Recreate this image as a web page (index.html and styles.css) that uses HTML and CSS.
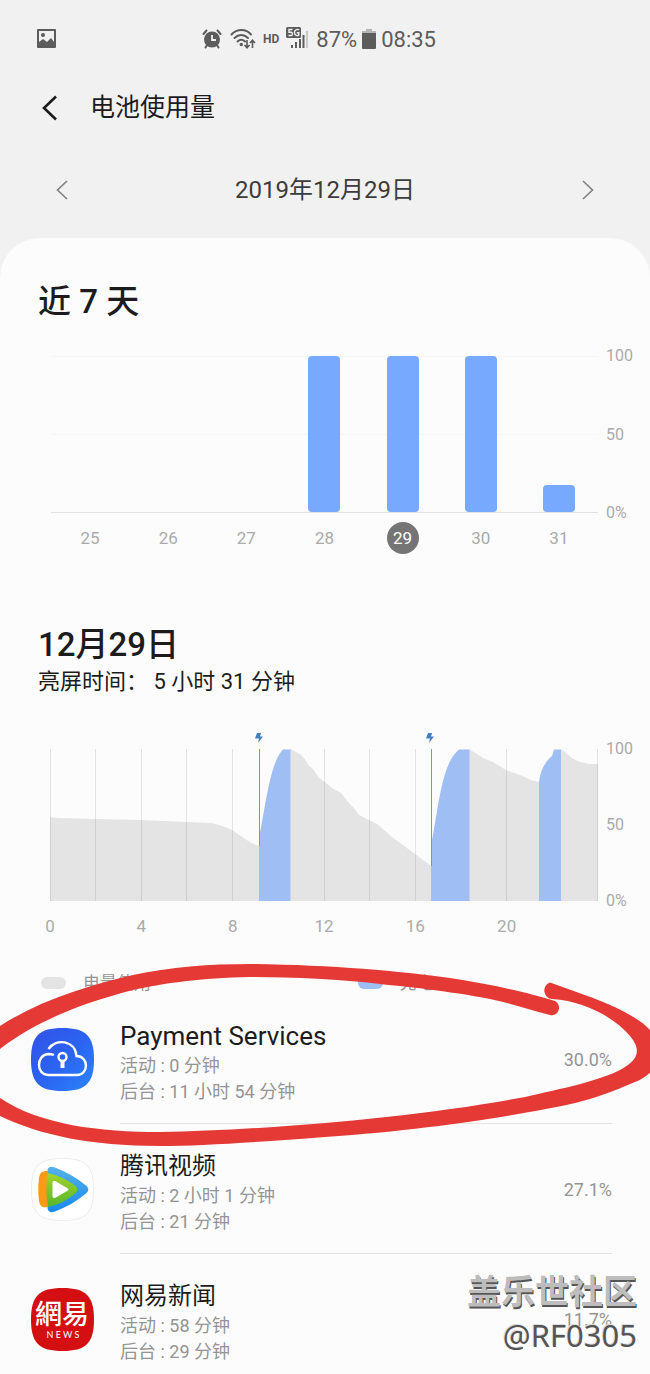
FILE: index.html
```html
<!DOCTYPE html>
<html lang="zh-CN">
<head>
  <meta charset="UTF-8">
  <title>电池使用量</title>
  <meta name="viewport" content="width=device-width, initial-scale=1">
  <link rel="stylesheet" href="styles.css">
</head>
<body>
  <div class="status-bar">
    <svg width="20" height="20" viewBox="0 0 20 20">
      <path fill="#5c5c5c" fill-rule="evenodd" d="M1 0h17a1 1 0 0 1 1 1v17a1 1 0 0 1-1 1H1a1 1 0 0 1-1-1V1a1 1 0 0 1 1-1zM2 2v11l4-3 4 3 4-4 3 4V2z"/>
      <circle cx="6" cy="6" r="2" fill="#5c5c5c"/>
    </svg>
    <div class="status-icons">
      <!-- alarm -->
      <svg width="20" height="20" viewBox="0 0 20 20" fill="none" stroke="#5c5c5c">
        <circle cx="10" cy="10.500" r="8" fill="#5c5c5c" stroke="none"/>
        <path stroke-width="2" stroke-linecap="round" d="M1.500 5l3-3.500M18.500 5l-3-3.500M5 16l-1.500 2.500M15 16l1.500 2.500"/>
        <path stroke="#f1f1f1" stroke-width="1.800" d="M10 6v5h4"/>
      </svg>
      <!-- wifi -->
      <svg class="wifi" width="26" height="20" viewBox="0 0 26 20" fill="none" stroke="#5c5c5c">
        <path stroke-width="2" stroke-linecap="round" d="M1.500 5.500C7-.5 16-.5 21 5.500M4.500 9c4-4 9.500-4 13.500 0M7.500 12.500c2.500-2.400 5-2.400 7.500 0"/>
        <circle cx="11.300" cy="15.500" r="1.700" fill="#5c5c5c" stroke="none"/>
        <path stroke-width="1.600" d="M17 11v7.500M14.500 16l2.500 2.800 2.500-2.800M22.500 19v-7.500M20 14l2.500-2.800L25 14"/>
      </svg>
      <span class="hd">HD</span>
      <!-- signal -->
      <svg class="signal" width="22" height="24" viewBox="0 0 22 24">
        <rect width="15" height="11" rx="1.500" fill="#5c5c5c"/>
        <path fill="none" stroke="#f1f1f1" stroke-width="1.400" d="M6.500 2.500H3v2.800h2.200c1.600 0 1.600 3.200 0 3.200H2.500M13 3c-1-1-4.500-1-4.500 2.500S12 9 12.800 8V5.800h-2"/>
        <path stroke="#5c5c5c" stroke-width="2" d="M6 18v3M10 15v6M14 12v9M17.500 8v13"/>
        <path stroke="#bdbdbd" stroke-width="1.500" d="M21 4v17"/>
      </svg>
      <span class="percent">87%</span>
      <svg class="battery" width="14" height="20" viewBox="0 0 14 20">
        <path fill="#b5b5b5" d="M4 0h6v2h4v3H0V2h4z"/>
        <path fill="#5c5c5c" d="M0 4h14v15a1 1 0 0 1-1 1H1a1 1 0 0 1-1-1z"/>
      </svg>
      <span>08:35</span>
    </div>
  </div>

  <header class="app-bar">
    <button type="button" aria-label="返回">
      <svg width="16" height="26" viewBox="0 0 16 26"><path fill="none" stroke="#1c1c1c" stroke-width="2.600" d="M14 1.500L2 13l12 11.500"/></svg>
    </button>
    <h1>电池使用量</h1>
  </header>

  <nav class="date-nav">
    <button type="button" aria-label="前一天">
      <svg width="12" height="20" viewBox="0 0 12 20"><path fill="none" stroke="#808080" stroke-width="1.600" d="M11 1L1.500 10l9.500 9"/></svg>
    </button>
    <span>2019年12月29日</span>
    <button type="button" aria-label="后一天">
      <svg width="12" height="20" viewBox="0 0 12 20"><path fill="none" stroke="#808080" stroke-width="1.600" d="M1 1l9.500 9L1 19"/></svg>
    </button>
  </nav>

  <main class="card">
    <section class="week">
      <h2>近 7 天</h2>
      <div class="chart">
        <div class="bars">
          <div class="bar" style="height: 0%"></div>
          <div class="bar" style="height: 0%"></div>
          <div class="bar" style="height: 0%"></div>
          <div class="bar" style="height: 100%"></div>
          <div class="bar" style="height: 100%"></div>
          <div class="bar" style="height: 100%"></div>
          <div class="bar" style="height: 17%"></div>
        </div>
        <div class="y-axis"><span>100</span><span>50</span><span>0%</span></div>
        <div class="days">
          <span>25</span>
          <span>26</span>
          <span>27</span>
          <span>28</span>
          <span class="selected">29</span>
          <span>30</span>
          <span>31</span>
        </div>
      </div>
    </section>

    <section class="day">
      <h2>12月29日</h2>
      <p>亮屏时间： 5 小时 31 分钟</p>
      <div class="chart">
        <svg class="area" viewBox="0 0 548 170" preserveAspectRatio="none">
          <!-- battery level -->
          <path fill="#e4e4e4" d="M0 170V86L8 87 46 88 91 89 137 91 161 92C170 94 176 96 182 99C190 104 202 114 210 115V170z"/>
          <path fill="#e4e4e4" d="M240 170V18L250 23 254 27 259 35 263 38 269 47 275 51 282 57 291 62 298 71 303 76 309 84 327 93 342 106 365 123 381 135V170z"/>
          <path fill="#e4e4e4" d="M419 170V18L433 27 443 31 456 39 470 44 481 49 489 51V170z"/>
          <path fill="#e4e4e4" d="M511 170V18L522 27 530 31 539 33H548V170z"/>
          <!-- two hour grid -->
          <path fill="none" stroke="#808080" stroke-opacity=".2" d="M.5 18V170M45.500 18V170M91.500 18V170M136.500 18V170M182.500 18V170M274.500 18V170M319.500 18V170M365.500 18V170M456.500 18V170M547.500 18V170"/>
          <!-- charging -->
          <path fill="#9fbef4" d="M209 170V108C216 70 221 30 233 18.500H240.500V170z"/>
          <path fill="#9fbef4" d="M381 170V115C389 73 392 32 409 18.500H419.500V170z"/>
          <path fill="#9fbef4" d="M489 170V51C491 38 495 31 502 25L504 18.500H511V170z"/>
          <path fill="none" stroke="#6a99d4" d="M209.500 18V115M381.500 18V135"/>
          <path fill="#4180bd" d="M207 2h4l-1 3.500h3l-5 6.500 1-4.500h-4zM378 2h4l-1 3.500h3l-5 6.500 1-4.500h-4z"/>
        </svg>
        <div class="y-axis"><span>100</span><span>50</span><span>0%</span></div>
        <div class="hours">
          <span>0</span>
          <span>4</span>
          <span>8</span>
          <span>12</span>
          <span>16</span>
          <span>20</span>
        </div>
      </div>
      <div class="legend">
        <span class="usage">电量使用</span>
        <span class="charging">充电</span>
      </div>
    </section>

    <section class="apps">
      <ul>
        <li>
          <svg class="app-icon" viewBox="0 0 63 63">
            <defs>
              <linearGradient id="cloud" x1="0" y1="0" x2="1" y2="1">
                <stop offset="0" stop-color="#3352e4"/>
                <stop offset=".5" stop-color="#2b63f2"/>
                <stop offset="1" stop-color="#2b85f8"/>
              </linearGradient>
            </defs>
            <path fill="url(#cloud)" d="M31.500 0C55 0 63 8 63 31.500S55 63 31.500 63 0 55 0 31.500 8 0 31.500 0z"/>
            <g fill="none" stroke="#fff" stroke-width="2.400">
              <path d="M17.500 21C25 10 44 12 45.500 28C58 28 58 47 46 47H17C5 47 5 27 17 26C19 26 21 26 23 27"/>
              <circle cx="31.500" cy="29" r="4"/>
              <path stroke-width="4" d="M31.500 33v7"/>
            </g>
          </svg>
          <div class="info">
            <div>
              <h3 class="latin">Payment Services</h3>
              <p>活动 : 0 分钟</p>
              <p>后台 : 11 小时 54 分钟</p>
            </div>
            <span class="share">30.0%</span>
          </div>
        </li>
        <li>
          <svg class="app-icon" viewBox="0 0 63 63">
            <defs>
              <linearGradient id="tv-blue" x1="0" y1="0" x2="0" y2="1">
                <stop offset="0" stop-color="#55b2e8"/>
                <stop offset="1" stop-color="#1789ee"/>
              </linearGradient>
              <linearGradient id="tv-green" x1="0" y1="0" x2="0" y2="1">
                <stop offset="0" stop-color="#a3d42c"/>
                <stop offset="1" stop-color="#56b62c"/>
              </linearGradient>
            </defs>
            <path fill="#fff" stroke="#ececec" d="M31.500 .5C55 .5 62.500 8 62.500 31.500S55 62.500 31.500 62.500 .5 55 .5 31.500 8 .5 31.500 .5z"/>
            <path fill="url(#tv-blue)" d="M16.500 12C17 9 20 8 24 9.500C36 14 46 20 55 27.500C58 30 58 33 55 35.500C46 43 36 49 24 53.500C20 55 17 54 16.500 50z"/>
            <path fill="#ff9a16" d="M17 13C11 13 9 14 8 20C7 28 7 36 8 43C9 49 12 50 17 49z"/>
            <path fill="url(#tv-green)" d="M16.500 15C27 17 37 22 44 27.500C47 30 47 33 44 35.500C37 42 27 47 17 49C15 38 15 25 16.500 15z"/>
            <path fill="#fff" d="M21.500 25C21.500 23 23 22.500 25 23.500L36 30C38 31 38 32 36 33L25 39.500C23 40.500 21.500 40 21.500 38z"/>
          </svg>
          <div class="info">
            <div>
              <h3>腾讯视频</h3>
              <p>活动 : 2 小时 1 分钟</p>
              <p>后台 : 21 分钟</p>
            </div>
            <span class="share">27.1%</span>
          </div>
        </li>
        <li>
          <svg class="app-icon" viewBox="0 0 63 63">
            <path fill="#d30f12" d="M31.500 0C55 0 63 8 63 31.500S55 63 31.500 63 0 55 0 31.500 8 0 31.500 0z"/>
            <text class="netease" x="31" y="36">網易</text>
            <text class="news" x="32" y="50">N E W S</text>
          </svg>
          <div class="info">
            <div>
              <h3>网易新闻</h3>
              <p>活动 : 58 分钟</p>
              <p>后台 : 29 分钟</p>
            </div>
            <span class="share">11.7%</span>
          </div>
        </li>
      </ul>

      <!-- red marker round the first app -->
      <svg class="marker" viewBox="0 950 650 200" preserveAspectRatio="none">
        <path fill="#e53935" d="M550 982.500C575 992 610 1002 635 1018C648 1026 658 1036 660 1052C658 1070 645 1078 635 1082C612 1092 592 1099 575 1103C530 1113 440 1129 325 1137C260 1142 200 1146 160 1146C90 1146 40 1135 0 1116C-30 1095-30 1050 0 1026C40 1000 90 985 133 975C170 967 210 964 250 964C330 965 400 971 450 978C490 984 530 993 555 1001A7.500 7.500 0 0 1 550 1015C530 1010 510 1003 490 999C450 991 400 986 380 984C340 979 290 977 250 977C200 978 165 983 133 990C90 1001 40 1018 0 1049C-14 1065-14 1085 0 1098C40 1125 100 1132 160 1132C270 1130 420 1117 525 1097C560 1089 605 1080 625 1067C641 1057 639 1047 630 1036C615 1018 585 1001 552 999A8.500 8.500 0 0 1 550 982.500z"/>
      </svg>
    </section>
  </main>

  <div class="watermark">
    <strong>盖乐世社区</strong>
    <span>@RF0305</span>
  </div>
</body>
</html>
```
FILE: styles.css
```css
:root {
  --page-bg: #f1f1f1;
  --card-bg: #fcfcfc;
  --text: #1c1c1c;
  --muted: #949494;
  --axis: #aaaaaa;
  --bar: #77aaff;
}
* {
  box-sizing: border-box;
}
body {
  position: relative;
  margin: 0;
  background: var(--page-bg);
  color: var(--text);
  font-family: Roboto, "Noto Sans CJK SC", sans-serif;
}
h1, h2, h3, p, ul {
  margin: 0;
  padding: 0;
}
svg {
  display: block;
}
button {
  padding: 0;
  border: none;
  background: none;
  cursor: pointer;
}

/* top of the screen */
.status-bar {
  display: grid;
  grid-template-columns: 1fr auto 1fr;
  align-items: center;
  height: 78px;
  padding: 0 49px 0 37px;
}
.status-icons {
  display: flex;
  align-items: center;
  color: #5c5c5c;
  font-size: 22px;
}
.wifi {
  margin-left: 8px;
}
.hd {
  margin: 0 7px;
  font-size: 12px;
  font-weight: 700;
}
.percent {
  margin-left: 8px;
}
.battery {
  margin: 0 5px;
}
.app-bar {
  display: flex;
  align-items: center;
  gap: 32px;
  height: 60px;
  padding: 0 42px;
}
.app-bar h1 {
  font-size: 25px;
  font-weight: 400;
  line-height: 40px;
}
.date-nav {
  display: flex;
  align-items: center;
  justify-content: space-between;
  height: 100px;
  padding: 4px 56px 0;
  color: #3c3c3c;
  font-size: 24px;
  line-height: 32px;
}

/* card */
.card {
  padding-top: 42px;
  background: var(--card-bg);
  border-radius: 40px 40px 0 0;
}
h2 {
  padding-left: 38px;
  font-size: 33px;
  font-weight: 500;
  line-height: 44px;
}
.chart {
  display: grid;
  grid-template-columns: 1fr 44px;
  column-gap: 8px;
  padding-left: 50px;
}
.y-axis {
  display: flex;
  flex-direction: column;
  justify-content: space-between;
  margin: -10px 0;
  color: var(--axis);
  font-size: 16px;
  line-height: 20px;
}
.week .chart {
  column-gap: 8px;
  margin-top: 32px;
  padding-left: 51px;
}
.bars {
  display: grid;
  grid-template-columns: repeat(7, 1fr);
  align-items: end;
  justify-items: center;
  height: 157px;
  border-bottom: 1px solid #e2e2e2;
  background: linear-gradient(#f6f6f6 1px, transparent 1px) 0 0 / 100% 78px;
}
.bar {
  width: 32px;
  background: var(--bar);
  border-radius: 4px;
}
.days {
  display: grid;
  grid-template-columns: repeat(7, 1fr);
  justify-items: center;
  margin-top: 9px;
  color: var(--axis);
  font-size: 17px;
  line-height: 32px;
}
.days .selected {
  width: 32px;
  background: #757575;
  border-radius: 50%;
  color: #fff;
  text-align: center;
}

.day {
  margin-top: 69px;
}
.day p {
  padding-left: 38px;
  font-size: 22px;
  line-height: 30px;
}
.day .chart {
  margin-top: 34px;
}
.area {
  width: 100%;
  height: 170px;
}
.day .y-axis {
  margin-top: 8px;
}
.hours {
  display: grid;
  grid-template-columns: repeat(6, 1fr);
  justify-items: center;
  margin: 15px calc(100% / 12) 0 calc(100% / -12);
  color: var(--axis);
  font-size: 17px;
  line-height: 20px;
}
.legend {
  display: grid;
  grid-template-columns: 1fr 1fr;
  margin-top: 36px;
  padding-left: 41px;
  color: var(--muted);
  font-size: 17px;
  line-height: 22px;
}
.legend span {
  display: flex;
  align-items: center;
  gap: 17px;
}
.legend span::before {
  content: "";
  width: 25px;
  height: 12px;
  background: #e4e4e4;
  border-radius: 6px;
}
.legend .charging {
  padding-left: 12px;
}
.legend .charging::before {
  background: #9fbef4;
}

/* app list */
.apps {
  position: relative;
}
.apps ul {
  list-style: none;
}
.apps li {
  display: flex;
  align-items: flex-start;
  gap: 26px;
  padding: 0 38px 0 31px;
}
.app-icon {
  flex: none;
  width: 63px;
  height: 63px;
  margin-top: 34px;
}
.netease {
  fill: #fff;
  font: 500 27px "Noto Sans CJK TC", sans-serif;
  text-anchor: middle;
}
.news {
  fill: #fff;
  font: 9px Lato, sans-serif;
  text-anchor: middle;
}
.info {
  display: flex;
  flex: 1;
  justify-content: space-between;
  padding: 27px 0 18px;
  border-bottom: 1px solid #e4e4e4;
}
.apps li:last-child .info {
  padding-bottom: 10px;
  border-bottom: none;
}
.info h3 {
  margin-bottom: 2px;
  font-size: 24px;
  font-weight: 400;
  line-height: 30px;
}
.info .latin {
  font-size: 26px;
}
.info p {
  color: var(--muted);
  font-size: 18px;
  line-height: 26px;
}
.share {
  padding-top: 26px;
  color: var(--muted);
  font-size: 18px;
  line-height: 26px;
}
.marker {
  position: absolute;
  top: -44px;
  left: 0;
  width: 100%;
  height: 200px;
}

.watermark {
  position: absolute;
  right: 13px;
  bottom: 20px;
  display: flex;
  flex-direction: column;
  align-items: flex-end;
  color: #555;
}
.watermark strong {
  color: #bdbdbd;
  font-size: 34px;
  line-height: 46px;
  text-shadow: 1px 2px 0 #555;
}
.watermark span {
  font-family: "Noto Sans", sans-serif;
  font-size: 31px;
  line-height: 40px;
  text-shadow: -1px -1px 0 #ddd;
}
```
